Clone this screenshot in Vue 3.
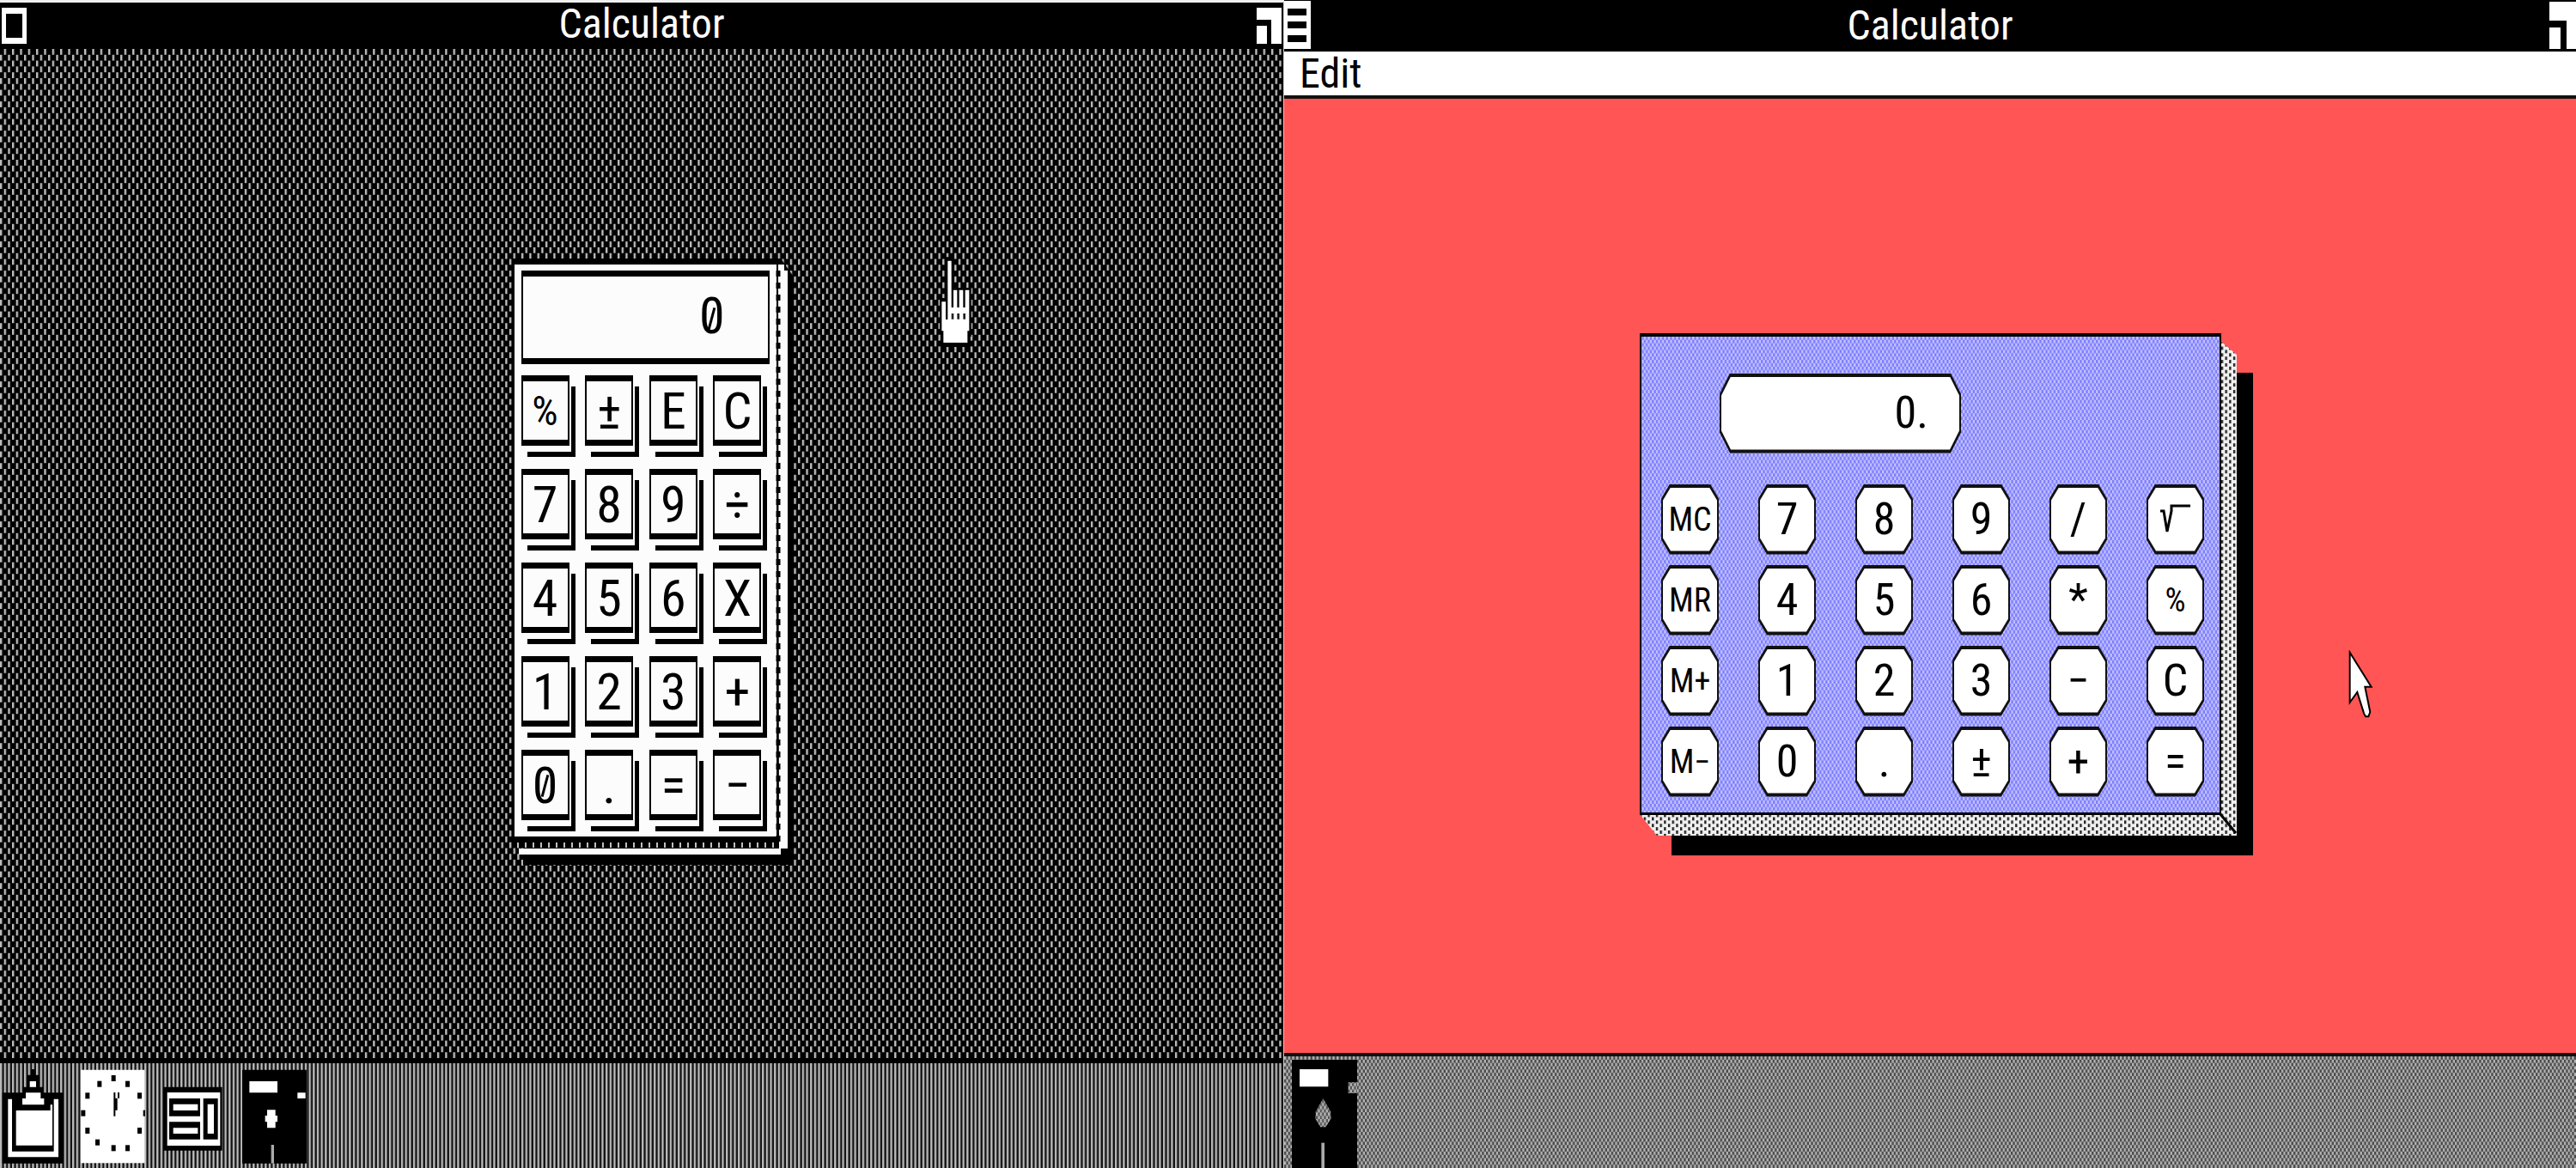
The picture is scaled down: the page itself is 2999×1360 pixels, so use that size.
<script setup>
const leftKeys = ['%', '±', 'E', 'C', '7', '8', '9', '÷', '4', '5', '6', 'X', '1', '2', '3', '+', '0', '.', '=', '−']
const rightKeys = [
  'MC', '7', '8', '9', '/', '√',
  'MR', '4', '5', '6', '*', '%',
  'M+', '1', '2', '3', '−', 'C',
  'M−', '0', '.', '±', '+', '='
]
const clockDots = [
  [107, 21], [156, 41], [198, 82], [218, 143], [198, 204], [156, 265],
  [107, 265], [51, 245], [16, 204], [1, 143], [16, 82], [58, 41]
]
</script>

<template>
  <main class="screens">
    <section class="pane mono">
      <header class="titlebar">
        <button class="box" aria-label="System menu">
          <svg viewBox="0 0 31 56"><path fill="#fff" fill-rule="evenodd" d="M2 6H31V48H2ZM7 13V41H26V13Z" /></svg>
        </button>
        <h1>Calculator</h1>
        <button class="box" aria-label="Zoom">
          <svg viewBox="0 0 31 56"><path fill="#fff" d="M0 6H29V48H17V20H0ZM0 27H12V48H0Z" /></svg>
        </button>
      </header>

      <div class="desktop">
        <svg class="dither" viewBox="0 8 640 173" preserveAspectRatio="none" aria-hidden="true">
          <defs>
            <pattern id="weave" width="4" height="2" patternUnits="userSpaceOnUse">
              <path fill="#c0c0c0" d="M2 0h1v1h-1zM0 1h1v1h-1z" />
            </pattern>
          </defs>
          <rect y="8" width="640" height="173" fill="#000" />
          <rect y="8" width="640" height="173" fill="url(#weave)" />
        </svg>

        <div class="slab">
          <svg class="casing" viewBox="0 0 329 706" preserveAspectRatio="none" aria-hidden="true">
            <path fill="#000" d="M0 0H313L327 20V706H13V686H0Z" />
            <path fill="#fcfcfc" d="M3 7H308V673H3ZM310 7H317V14H321V687H311ZM8 687H313V694H8Z" />
            <path stroke="#000" stroke-width="5" stroke-dasharray="7 7" d="M310 14V680" />
            <path stroke="#c0c0c0" stroke-width="6" stroke-dasharray="2 7" d="M6 683H310" />
          </svg>
          <output class="readout slashed">0</output>
          <div class="keys">
            <button v-for="k in leftKeys" :key="k" :class="{ slashed: k === '0' }">{{ k }}</button>
          </div>
        </div>

        <svg class="hand" viewBox="0 0 210 360" aria-hidden="true">
          <path fill="#000" d="M66 22H92V130H155V300H148V336H52V290H45V165H66Z" />
          <path fill="#fff" d="M73 35H86V198H93V137H106V198H113V137H127V198H134V137H148V280H142V321H58V280H52V178H66V240H73Z" />
          <path fill="#222" d="M86 219h8v20h-8zM106 219h8v20h-8zM127 219h8v20h-8z" />
        </svg>
      </div>

      <footer class="dock">
        <svg class="dither" viewBox="0 0 640 18" preserveAspectRatio="none" aria-hidden="true">
          <defs>
            <pattern id="pinstripe" width="2" height="2" patternUnits="userSpaceOnUse">
              <path fill="#bbb" d="M0 0h1v2h-1z" />
            </pattern>
          </defs>
          <rect width="640" height="18" fill="#111" />
          <rect width="640" height="18" fill="url(#pinstripe)" />
        </svg>
        <button class="icon" aria-label="Clipboard">
          <svg viewBox="0 0 225 330">
            <path fill="#000" d="M108 0h14v20h15v42h13v20h70v247H8V82h72V62h15V20h13z" />
            <path fill="#fff" d="M104 42h22v20h-22zM90 82h52v20h12v22H78v-22h12zM28 104h14v183h146V104h16v203H28zM56 144h120v-20h7v142H56z" />
          </svg>
        </button>
        <button class="icon" aria-label="Clock">
          <svg viewBox="0 0 225 330">
            <path fill="#fff" d="M0 2h223v326H0z" />
            <rect v-for="(d, i) in clockDots" :key="i" :x="d[0]" :y="d[1]" width="15" height="21" fill="#000" />
            <path fill="#000" d="M115 81h6v20h7v42h-7v21h-6zM129 81h6v20h-6z" />
          </svg>
        </button>
        <button class="icon" aria-label="Card file">
          <svg viewBox="0 0 225 330">
            <path fill="#000" d="M6 62h206v222H6z" />
            <path fill="#fff" d="M20 81h185v186H20z" />
            <path fill="#000" fill-rule="evenodd" d="M27 102h108v62H27zM41 122v22h86v-22zM27 184h108v61H27zM41 205v20h86v-20zM146 102h51v143h-51zM161 122v103h22V122z" />
          </svg>
        </button>
        <button class="icon" aria-label="Disk">
          <svg viewBox="0 0 225 330">
            <path fill="#000" d="M0 2h225v327H0z" />
            <path fill="#fff" d="M25 42h98v40H25zM193 82h28v20h-28zM87 142h29v20h7v22h-7v21H87v-21h-7v-22h7z" />
            <path fill="#aaa" d="M101 264h10v65h-10z" />
          </svg>
        </button>
      </footer>
    </section>

    <section class="pane color">
      <header class="titlebar">
        <button class="box" aria-label="System menu">
          <svg viewBox="0 0 31 60"><path fill="#fff" fill-rule="evenodd" d="M0 1H31V57H0ZM4 10V18H26V10ZM4 25V33H26V25ZM4 41V49H26V41Z" /></svg>
        </button>
        <h1>Calculator</h1>
        <button class="box" aria-label="Zoom">
          <svg viewBox="0 0 31 60"><path fill="#fff" d="M0 2H31V57H20V24H0ZM0 32H13V57H0Z" /></svg>
        </button>
      </header>
      <nav class="menubar"><button>Edit</button></nav>

      <div class="desktop">
        <div class="calc">
          <svg class="bevel" viewBox="0 0 714 608" preserveAspectRatio="none" aria-hidden="true">
            <defs>
              <pattern id="speckle" width="4" height="2" patternUnits="userSpaceOnUse" patternTransform="scale(2.35 3.886)">
                <path fill="#222" d="M0 0h1v1h-1zM2 1h1v1h-1z" />
              </pattern>
              <pattern id="lilac" width="2" height="2" patternUnits="userSpaceOnUse" patternTransform="scale(2.35 3.886)">
                <path fill="#7c7cff" d="M0 0h1v1h-1zM1 1h1v1h-1z" />
              </pattern>
            </defs>
            <path fill="#000" d="M37 46H714V608H37Z" />
            <path fill="#f0f0f0" d="M676 9L695 25V585H20L0 560Z" />
            <path fill="url(#speckle)" d="M676 9L695 25V585H20L0 560Z" />
            <path stroke="#000" stroke-width="3" d="M676 560L694 582" />
            <path fill="#000" d="M0 0H677V561H0Z" />
            <path fill="#c2c2ff" d="M2 4H675V558H2Z" />
            <path fill="url(#lilac)" d="M2 4H675V558H2Z" />
          </svg>
          <output class="window"><span>0.</span></output>
          <div class="pads">
            <button v-for="k in rightKeys" :key="k">
              <svg v-if="k === '√'" class="root" viewBox="0 0 36 36" role="img" aria-label="Square root">
                <path d="M0 8H4L8 32L13 8V2H35" fill="none" stroke="#000" stroke-width="3" />
              </svg>
              <span v-else>{{ k }}</span>
            </button>
          </div>
        </div>

        <svg class="arrow" viewBox="0 0 90 245" aria-hidden="true">
          <path fill="#fff" stroke="#000" stroke-width="6" d="M5 8V183L31 147L54 220L60 232H70L76 216L58 128H80Z" />
        </svg>
      </div>

      <footer class="dock">
        <svg class="dither" viewBox="0 0 640 34" preserveAspectRatio="none" aria-hidden="true">
          <defs>
            <pattern id="check" width="2" height="2" patternUnits="userSpaceOnUse">
              <path fill="#b4b4b4" d="M0 0h1v1h-1zM1 1h1v1h-1z" />
            </pattern>
          </defs>
          <rect width="640" height="34" fill="#484848" />
          <rect width="640" height="34" fill="url(#check)" />
        </svg>
        <button class="icon" aria-label="Disk">
          <svg viewBox="0 0 228 378">
            <defs>
              <pattern id="hub" width="14" height="23" patternUnits="userSpaceOnUse">
                <path fill="#b4b4b4" d="M0 0h7v12H0zM7 12h7v11H7z" />
              </pattern>
            </defs>
            <path fill="#000" d="M0 0H228V378H0Z" />
            <path fill="#fff" d="M27 33H127V94H27Z" />
            <path fill="#555" d="M197 79h31v38h-31zM109 136L136 182V206L118 235H100L83 206V182Z" />
            <path fill="url(#hub)" d="M197 79h31v38h-31zM109 136L136 182V206L118 235H100L83 206V182Z" />
            <path fill="#aaa" d="M103 290h11v88h-11z" />
          </svg>
        </button>
      </footer>
    </section>
  </main>
</template>

<style>
body {
  margin: 0;
}
</style>

<style scoped>
.screens {
  display: grid;
  grid-template-columns: 1495fr 1504fr;
  min-height: 100vh;
  background: #000;
  font-family: "Roboto Condensed", Roboto, "Liberation Sans", sans-serif;
}

button {
  margin: 0;
  padding: 0;
  border: 0;
  background: none;
  color: #000;
  font: inherit;
}

svg {
  display: block;
}

.pane {
  display: flex;
  flex-direction: column;
  box-sizing: border-box;
}

.mono {
  border-top: 3px solid #f0f0f0;
  border-right: 1px solid #ccc;
}

.titlebar {
  display: flex;
  justify-content: space-between;
  height: 54px;
  background: #000;
  color: #fff;
}

.titlebar h1 {
  margin: 0;
  font-size: 48px;
  font-weight: 400;
  line-height: 50px;
}

.color .titlebar {
  height: 60px;
}

.color .titlebar h1 {
  line-height: 60px;
}

.box {
  width: 31px;
}

.box svg {
  width: 31px;
}

.desktop {
  position: relative;
  flex: 1;
  display: grid;
  place-content: center;
}

.dither {
  position: absolute;
  inset: 0;
  width: 100%;
  height: 100%;
}

.dock {
  position: relative;
  display: flex;
  gap: 19px;
}

.icon {
  position: relative;
}

.mono .dock {
  box-sizing: border-box;
  height: 128px;
  padding-top: 7px;
  border-top: 6px solid #000;
}

.mono .dock .icon {
  width: 75px;
  height: 110px;
}

/* Monochrome calculator */
.mono .desktop {
  padding: 0 0 12px 8px;
}

.slab {
  position: relative;
  box-sizing: border-box;
  width: 305px;
  padding: 7px 8px 14px;
}

.casing {
  position: absolute;
  left: -3px;
  top: -7px;
  width: 329px;
  height: 706px;
}

.readout {
  position: relative;
  display: block;
  box-sizing: border-box;
  height: 109px;
  padding-right: 50px;
  border: solid #000;
  border-width: 7px 2px;
  background: #fcfcfc;
  font-size: 60px;
  line-height: 92px;
  text-align: right;
}

.keys {
  position: relative;
  display: grid;
  grid-template-columns: repeat(4, 56px);
  justify-content: space-between;
  row-gap: 27px;
  padding: 13px 9px 0 0;
}

.keys button {
  position: relative;
  height: 82px;
  border: solid #000;
  border-width: 7px 2px;
  background: #fcfcfc;
  box-shadow: 2px 7px 0 #fcfcfc, 7px 13px 0 #000;
  font-size: 60px;
  line-height: 70px;
}

.keys button:first-child {
  font-size: 48px;
}

.slashed::after {
  content: "";
  position: absolute;
  left: 50%;
  top: 50%;
  width: 3px;
  height: 26px;
  margin: -12px 0 0 -2px;
  background: #000;
  transform: rotate(15deg);
}

.readout.slashed::after {
  left: auto;
  right: 64px;
}

.hand {
  position: absolute;
  left: 72.2%;
  top: 20%;
  width: 70px;
}

/* Colour calculator */
.menubar {
  display: flex;
  height: 51px;
  padding-left: 18px;
  border-bottom: 4px solid #111;
  background: #fff;
}

.menubar button {
  font-size: 48px;
  line-height: 50px;
}

.color .desktop {
  padding-bottom: 4px;
  background: #ff5555;
}

.calc {
  position: relative;
  box-sizing: border-box;
  width: 676px;
  padding: 47px 19px 22px 25px;
}

.bevel {
  position: absolute;
  left: 0;
  top: 0;
  width: 714px;
  height: 608px;
}

.window {
  position: relative;
  display: block;
  box-sizing: border-box;
  width: 281px;
  height: 93px;
  margin-left: 68px;
  padding-right: 38px;
  background: #111;
  clip-path: polygon(12px 0, 269px 0, 100% 24px, 100% 69px, 269px 100%, 12px 100%, 0 69px, 0 24px);
  font-size: 52px;
  line-height: 92px;
  text-align: right;
}

.window::before,
.pads button::before {
  content: "";
  position: absolute;
  inset: 4px 2px;
  background: #fff;
}

.window::before {
  clip-path: polygon(11px 0, 266px 0, 100% 22px, 100% 63px, 266px 100%, 11px 100%, 0 63px, 0 22px);
}

.window span,
.pads span {
  position: relative;
}

.pads {
  position: relative;
  display: grid;
  grid-template-columns: repeat(6, 67px);
  justify-content: space-between;
  row-gap: 12px;
  margin-top: 36px;
}

.pads button {
  position: relative;
  display: grid;
  place-items: center;
  height: 82px;
  background: #111;
  clip-path: polygon(10px 0, 57px 0, 100% 17px, 100% 65px, 57px 100%, 10px 100%, 0 65px, 0 17px);
  font-size: 52px;
  line-height: 82px;
}

.pads button:nth-child(6n + 1) {
  font-size: 38px;
}

.pads button:nth-child(12) {
  font-size: 38px;
}

.pads button::before {
  clip-path: polygon(9px 0, 54px 0, 100% 15px, 100% 59px, 54px 100%, 9px 100%, 0 59px, 0 15px);
}

.root {
  position: relative;
  width: 36px;
}

.arrow {
  position: absolute;
  left: 82.4%;
  top: 57.8%;
  width: 30px;
}

.color .dock {
  box-sizing: border-box;
  height: 134px;
  padding: 4px 0 0 9px;
  border-top: 4px solid #111;
}

.color .icon {
  width: 76px;
  height: 126px;
}
</style>
